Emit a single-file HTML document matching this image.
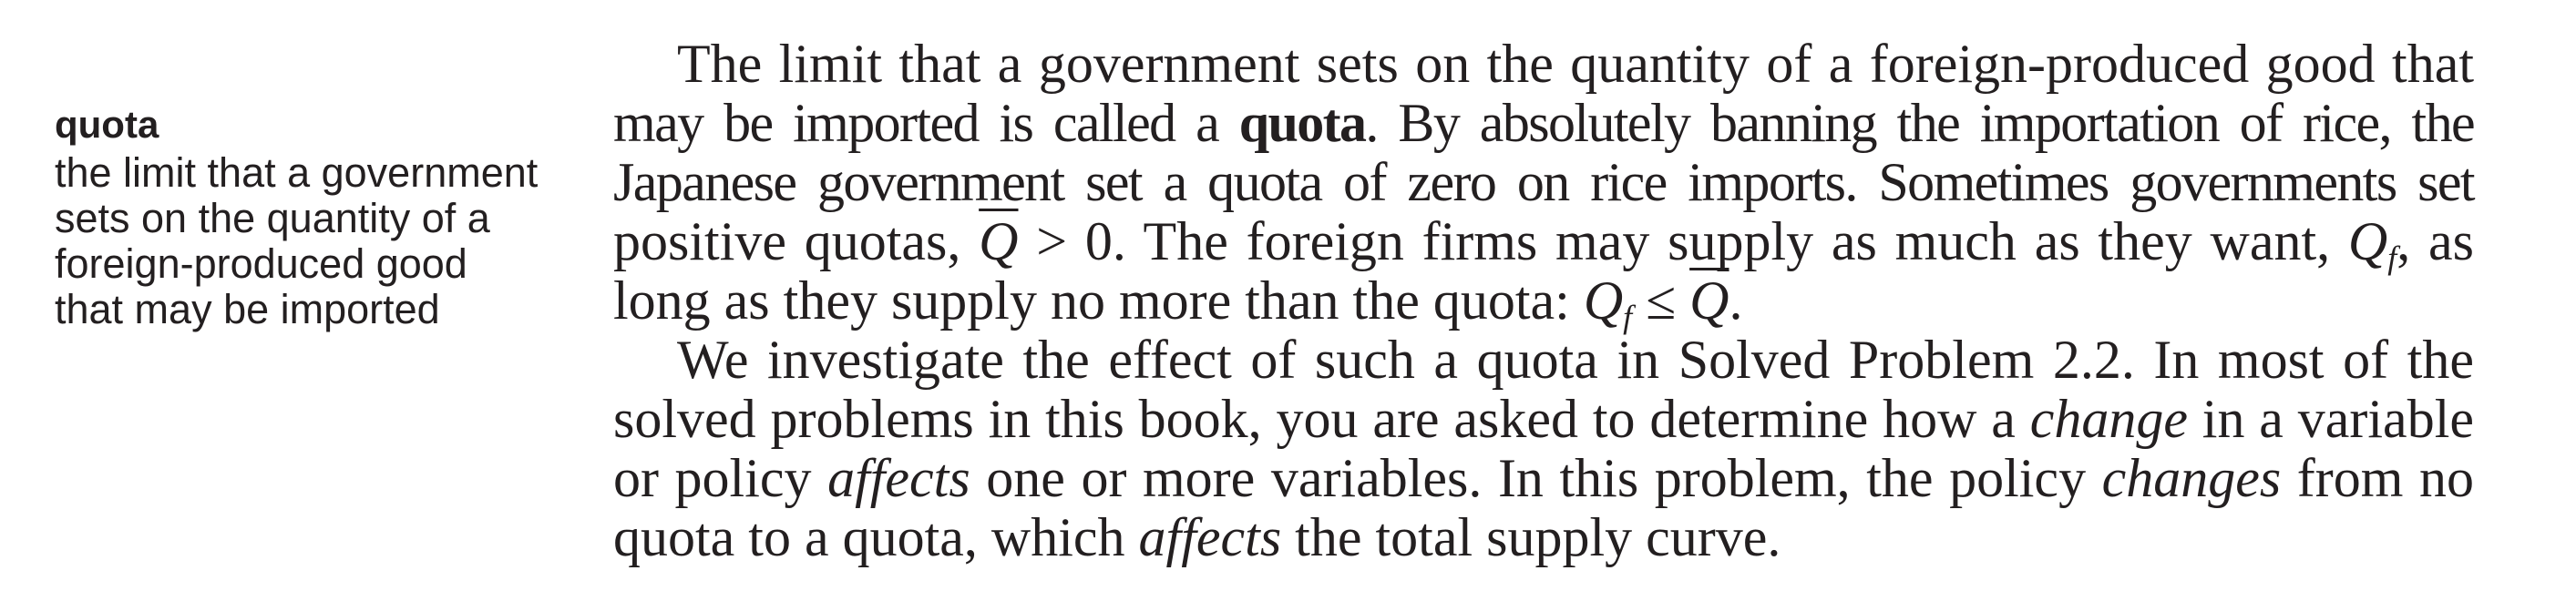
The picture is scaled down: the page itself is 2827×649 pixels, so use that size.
<!DOCTYPE html>
<html><head><meta charset="utf-8"><style>
html,body{margin:0;padding:0;background:#fff;width:2827px;height:649px;overflow:hidden;}
body{position:relative;color:#231f20;}
.side{position:absolute;left:60px;font-family:"Liberation Sans",sans-serif;font-size:45px;line-height:50px;}
.term{position:absolute;left:60px;top:112px;font-family:"Liberation Sans",sans-serif;font-weight:bold;font-size:42px;line-height:50px;}
.main{position:absolute;left:673px;width:2042px;top:38px;font-family:"Liberation Serif",serif;font-size:60px;}
.l{height:65px;line-height:65px;text-align:justify;text-align-last:justify;white-space:normal;overflow:visible;}
.t{letter-spacing:-1.6px;word-spacing:-4px;}
.ind{padding-left:70px;}
.ov{text-decoration:overline;text-decoration-thickness:3px;}
sub{font-size:36px;vertical-align:-10px;line-height:0;}
</style></head><body>
<div class="term">quota</div>
<div class="side" style="top:165px">the limit that a government<br>sets on the quantity of a<br>foreign-produced good<br>that may be imported</div>
<div class="main">
<div class="l ind">The limit that a government sets on the quantity of a foreign-produced good that</div>
<div class="l t">may be imported is called a <b>quota</b>. By absolutely banning the importation of rice, the</div>
<div class="l t">Japanese government set a quota of zero on rice imports. Sometimes governments set</div>
<div class="l">positive quotas, <i class="ov">Q</i> &gt; 0. The foreign firms may supply as much as they want, <i>Q<sub>f</sub></i>, as</div>
<div class="l" style="text-align-last:left">long as they supply no more than the quota: <i>Q<sub>f</sub></i> ≤ <i class="ov">Q</i>.</div>
<div class="l ind">We investigate the effect of such a quota in Solved Problem 2.2. In most of the</div>
<div class="l">solved problems in this book, you are asked to determine how a <i>change</i> in a variable</div>
<div class="l">or policy <i>affects</i> one or more variables. In this problem, the policy <i>changes</i> from no</div>
<div class="l" style="text-align-last:left">quota to a quota, which <i>affects</i> the total supply curve.</div>
</div>
</body></html>
